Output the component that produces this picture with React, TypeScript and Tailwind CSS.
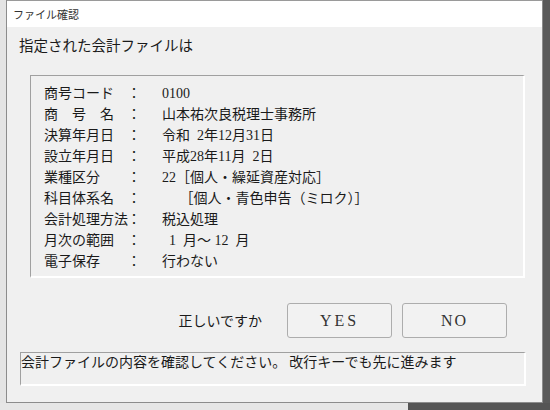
import React from "react";

const rows: [string, string][] = [
  ["商号コード", "0100"],
  ["商　号　名", "山本祐次良税理士事務所"],
  ["決算年月日", "令和  2年12月31日"],
  ["設立年月日", "平成28年11月  2日"],
  ["業種区分", "22［個人・繰延資産対応］"],
  ["科目体系名", "　 ［個人・青色申告（ミロク）］"],
  ["会計処理方法", "税込処理"],
  ["月次の範囲", "  1  月～ 12  月"],
  ["電子保存", "行わない"],
];

const jp = { fontFamily: '"Noto Sans CJK JP", "Noto Sans", sans-serif' };
const mixed = { fontFamily: '"Liberation Serif", "Noto Sans CJK JP", serif' };

export default function App() {
  return (
    <div className="w-[550px] h-[410px] flex flex-col bg-[#5a5a5a] overflow-hidden">
      <div className="flex h-[403px]">
        <div className="w-[6px] bg-[#e4e4e4]" />
        <div className="w-[537px] flex flex-col border-l border-r border-b border-[#8c8c8c]">
          <div
            className="h-[27px] bg-white flex items-center pl-[6px] text-[11px] text-[#333] border-t border-[#9a9a9a]"
            style={jp}
          >
            ファイル確認
          </div>
          <div className="flex-1 bg-[#f0f0f0] flex flex-col text-[#1a1a1a]">
            <div className="pl-[12px] pt-[8px] h-[48px] text-[14.5px] leading-[20px]" style={jp}>
              指定された会計ファイルは
            </div>
            <div className="ml-[23px] w-[495px] h-[203px] border-t border-l border-[#a0a0a0] border-b-2 border-r-2 border-b-white border-r-white pt-[7px] pl-[13px]">
              {rows.map(([k, v]) => (
                <div key={k} className="grid grid-cols-[83px_14px_1fr] h-[21px] items-center text-[14px] leading-[20px]" style={mixed}>
                  <span className="whitespace-pre">{k}</span>
                  <span className="text-center">：</span>
                  <span className="pl-[21px] whitespace-pre">{v}</span>
                </div>
              ))}
            </div>
            <div className="flex items-center justify-end mr-[35px] mt-[25px] h-[35px]">
              <span className="text-[14px] mr-[25px]" style={jp}>正しいですか</span>
              <button
                className="w-[105px] h-[35px] border border-[#adadad] rounded-[3px] bg-[#f2f2f2] text-[16px] tracking-[3px] text-[#333]"
                style={mixed}
              >
                YES
              </button>
              <button
                className="ml-[10px] w-[105px] h-[35px] border border-[#adadad] rounded-[3px] bg-[#f2f2f2] text-[16px] tracking-[2px] text-[#333]"
                style={mixed}
              >
                NO
              </button>
            </div>
            <div
              className="ml-[13px] mt-[14px] w-[506px] h-[34px] border-t border-l border-[#a0a0a0] border-b-2 border-r-2 border-b-white border-r-white text-[14px] leading-[17px] whitespace-pre"
              style={jp}
            >
              会計ファイルの内容を確認してください。 改行キーでも先に進みます
            </div>
          </div>
        </div>
        <div className="flex-1 bg-[#5a5a5a]" />
      </div>
      <div className="flex h-[7px]">
        <div className="w-[408px] bg-[#e6e6e6]" />
        <div className="flex-1 bg-[#555555]" />
      </div>
    </div>
  );
}
